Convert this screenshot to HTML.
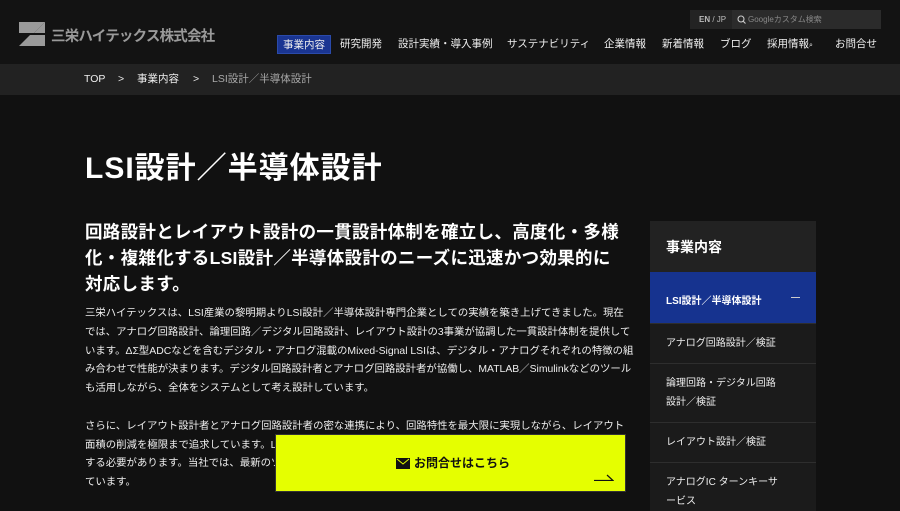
<!DOCTYPE html>
<html><head><meta charset="utf-8"><style>
*{margin:0;padding:0;box-sizing:border-box}
html,body{width:900px;height:511px;overflow:hidden}
body{background:#111;color:#fff;font-family:"Liberation Sans","Noto Sans CJK JP",sans-serif;position:relative}
.hdr{position:absolute;left:0;top:0;width:900px;height:64px;background:#131313}
.logo{position:absolute;left:19px;top:22px}
.logotext{position:absolute;left:51px;top:25px;font-size:14.5px;font-weight:bold;color:#9a9a9a;letter-spacing:-0.8px}
.lang{position:absolute;left:690px;top:10px;width:92px;height:19px;background:#232323;font-size:8px;color:#bbb;padding:5px 0 0 9px}
.search{position:absolute;left:732px;top:10px;width:149px;height:19px;background:#2b2b2b;font-size:8px;color:#888;padding:4px 0 0 16px}
.search svg{position:absolute;left:5px;top:5px}
.nav{position:absolute;top:35px;left:277px;font-size:10.5px;color:#eee;white-space:nowrap}
.nav span{position:absolute;top:0;height:19px;line-height:19px}
.nav .on{background:#1a3592;padding:0 5px;left:0;border:1px solid #2a4aaa}
.bc{position:absolute;top:64px;left:0;width:900px;height:31px;background:#222;font-size:10.5px;color:#eee;line-height:31px}
.bc span{position:absolute}
h1{position:absolute;left:85px;top:143px;font-size:30px;font-weight:bold;letter-spacing:1px}
.lead{position:absolute;left:85px;top:219px;width:552px;font-size:17.5px;font-weight:bold;line-height:26px;letter-spacing:0.3px}
.body{position:absolute;left:85px;top:305px;width:545px;font-size:10.4px;line-height:18.8px;color:#eee;white-space:nowrap}
.body p{margin-bottom:18.8px}
.side{position:absolute;left:650px;top:221px;width:166px}
.side .h{height:51px;background:#222;font-size:14px;font-weight:bold;padding:16px 0 0 16px}
.side .a{height:51px;background:#16338f;font-size:10px;font-weight:bold;padding:20px 0 0 16px;position:relative}
.side .a:after{content:"";position:absolute;right:16px;top:25px;width:9px;height:1px;background:#ccc}
.side .i{background:#1b1b1b;border-top:1px solid #2e2e2e;font-size:10px;line-height:19px;padding:10px 16px 10px 16px;color:#eee}
.cta{position:absolute;left:275px;top:434px;width:351px;height:58px;background:#e5ff00;border:1px solid #333}
.cta .t{position:absolute;top:19px;color:#111;font-size:12px;font-weight:bold}
</style></head><body>
<div class="hdr"></div>
<svg class="logo" width="26" height="24" viewBox="0 0 26 24"><path d="M0 0 H26 L15 11 H0 Z M0 24 V13 H26 V24 Z" fill="#9a9a9a"/><path d="M0 24 L11 13 H0 Z" fill="#131313"/><path d="M26 0 V11 H15 Z" fill="#9a9a9a"/></svg>
<div class="logotext">三栄ハイテックス株式会社</div>
<div class="lang"><b>EN</b> / JP</div>
<div class="search"><svg width="9" height="9" viewBox="0 0 9 9"><circle cx="4" cy="4" r="3" fill="none" stroke="#ccc" stroke-width="1.1"/><path d="M6 6 L8.5 8.5" stroke="#ccc" stroke-width="1.1"/></svg>Googleカスタム検索</div>
<div class="nav">
<span class="on">事業内容</span>
<span style="left:63px">研究開発</span>
<span style="left:121px">設計実績・導入事例</span>
<span style="left:230px">サステナビリティ</span>
<span style="left:327px">企業情報</span>
<span style="left:385px">新着情報</span>
<span style="left:443px">ブログ</span>
<span style="left:490px">採用情報<small style="font-size:7px">⌕</small></span>
<span style="left:558px">お問合せ</span>
</div>
<div class="bc"><span style="left:84px">TOP</span><span style="left:118px">&gt;</span><span style="left:137px">事業内容</span><span style="left:193px">&gt;</span><span style="left:212px;color:#aaa">LSI設計／半導体設計</span></div>
<h1>LSI設計／半導体設計</h1>
<div class="lead">回路設計とレイアウト設計の一貫設計体制を確立し、高度化・多様<br>化・複雑化するLSI設計／半導体設計のニーズに迅速かつ効果的に<br>対応します。</div>
<div class="body">
<p>三栄ハイテックスは、LSI産業の黎明期よりLSI設計／半導体設計専門企業としての実績を築き上げてきました。現在<br>では、アナログ回路設計、論理回路／デジタル回路設計、レイアウト設計の3事業が協調した一貫設計体制を提供して<br>います。ΔΣ型ADCなどを含むデジタル・アナログ混載のMixed-Signal LSIは、デジタル・アナログそれぞれの特徴の組<br>み合わせで性能が決まります。デジタル回路設計者とアナログ回路設計者が協働し、MATLAB／Simulinkなどのツール<br>も活用しながら、全体をシステムとして考え設計しています。</p>
<p>さらに、レイアウト設計者とアナログ回路設計者の密な連携により、回路特性を最大限に実現しながら、レイアウト<br>面積の削減を極限まで追求しています。LSIの微細化が進むにつれ、設計者はより多くの要素を考慮<br>する必要があります。当社では、最新のツールと豊富な経験を活かし、高品質な設計を実現し<br>ています。</p>
<p>LSI設計／半導体設計ビジネスは、今後ますます高度化、多様化、複雑化していくことが予想されます。そのため、私た</p>
</div>
<div class="side">
<div class="h">事業内容</div>
<div class="a">LSI設計／半導体設計</div>
<div class="i">アナログ回路設計／検証</div>
<div class="i">論理回路・デジタル回路<br>設計／検証</div>
<div class="i">レイアウト設計／検証</div>
<div class="i">アナログIC ターンキーサ<br>ービス</div>
</div>
<div class="cta"><svg style="position:absolute;left:120px;top:23px" width="14" height="11" viewBox="0 0 14 11"><rect width="14" height="11" fill="#111"/><path d="M1 1 L7 6 L13 1" fill="none" stroke="#e5ff00" stroke-width="1"/></svg><span class="t" style="left:138px">お問合せはこちら</span><svg style="position:absolute;left:318px;top:38px" width="20" height="8" viewBox="0 0 20 8"><path d="M0 7.5 H19 L13 2" fill="none" stroke="#111" stroke-width="1.2"/></svg></div>
</body></html>
